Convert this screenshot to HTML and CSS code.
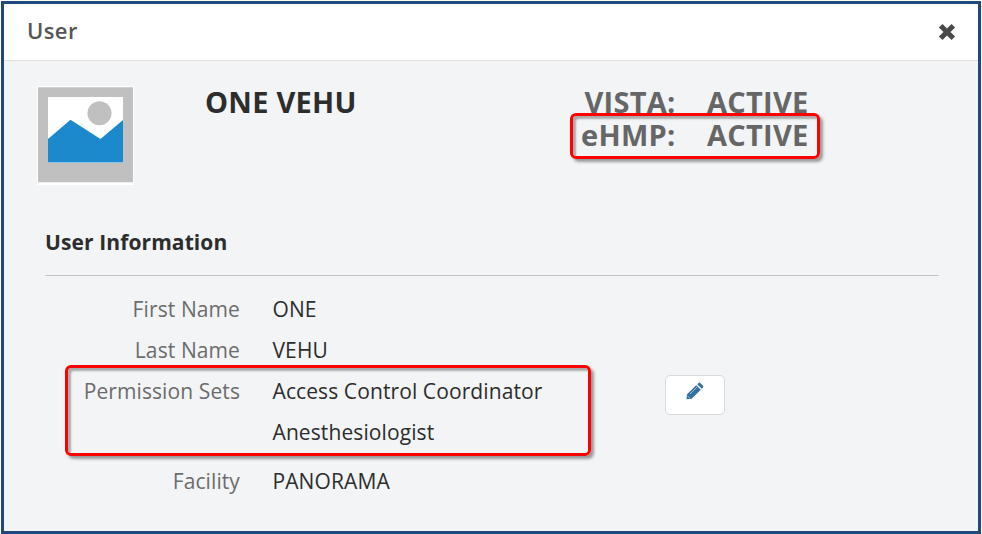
FILE: index.html
```html
<!DOCTYPE html>
<html lang="en">
<head>
<meta charset="utf-8">
<title>User</title>
<link rel="stylesheet" href="styles.css">
</head>
<body>
<main class="modal">
  <header class="modal-header">
    <h1 class="modal-title">User</h1>
    <button class="close" type="button" aria-label="Close">
      <svg width="18" height="18" viewBox="0 0 18 18"><path d="M2.7 2.7L15.3 15.3M15.3 2.7L2.7 15.3"/></svg>
    </button>
  </header>
  <section class="summary">
    <svg class="avatar" width="97" height="99" viewBox="0 0 97 99">
      <path fill="#fff" d="M0 0h97v99H0z"/>
      <path fill="#c0c0c0" d="M1 1.3h95v95H1z"/>
      <path fill="#fff" d="M11 11h75v66H11z"/>
      <circle cx="62.5" cy="27.3" r="12" fill="#c0c0c0"/>
      <path fill="#1b89cc" d="M11 53L33.5 33.7L63.5 53L86 34v42.5H11z"/>
    </svg>
    <h2 class="name">ONE VEHU</h2>
    <dl class="status">
      <dt>VISTA:</dt><dd>ACTIVE</dd>
      <dt>eHMP:</dt><dd>ACTIVE</dd>
      <div class="mark mark-status"></div>
    </dl>
  </section>
  <section class="info">
    <h3 class="info-title">User Information</h3>
    <div class="row"><span class="label">First Name</span><span class="value">ONE</span></div>
    <div class="row"><span class="label">Last Name</span><span class="value">VEHU</span></div>
    <div class="row permissions">
      <span class="label">Permission Sets</span>
      <div class="value sets"><span>Access Control Coordinator</span><span>Anesthesiologist</span></div>
      <button class="edit" type="button" aria-label="Edit permission sets">
        <svg width="18" height="18" viewBox="0 0 18 18">
          <path fill="#3071a0" d="M.5 17.3L1 12.2L10.2 3.2L14.8 7.8L5.6 16.8ZM11.2 2.2L12.5.9Q13.4.3 14.3 1L17 3.7Q17.7 4.6 17 5.5L15.8 6.8Z"/>
          <path fill="none" stroke="#a9c9dd" stroke-width=".9" d="M4 12L11 5M1.6 14L4 16.3"/>
        </svg>
      </button>
      <div class="mark mark-permissions"></div>
    </div>
    <div class="row facility"><span class="label">Facility</span><span class="value">PANORAMA</span></div>
  </section>
</main>
</body>
</html>
```
FILE: styles.css
```css
* { box-sizing: border-box; }
body { margin: 0; background: #fff; font-family: "Open Sans", "Noto Sans", sans-serif; color: #2d2d2d; }
h1, h2, h3, dl, dd { margin: 0; }
button { padding: 0; font: inherit; }
.modal { width: 980px; height: 533px; margin: 1px; border: 3px solid #1f497d; background: #f2f4f6; }
.modal-header { display: flex; align-items: center; justify-content: space-between; height: 57px; padding: 0 22px 3px 23px; border-bottom: 1px solid #e0e0e0; background: #fff; }
.modal-title { margin-top: -1px; font-size: 22px; line-height: 30px; font-weight: 600; letter-spacing: .4px; color: #555; }
.close { display: flex; border: 0; background: none; margin-top: 3px; }
.close path { stroke: #494949; stroke-width: 5; }
.summary { display: flex; height: 160px; padding: 24px 0 0 33px; }
.avatar { display: block; flex: none; margin-top: 1px; }
.name { flex: none; width: 445.5px; padding-left: 71px; font-size: 29px; line-height: 33px; font-weight: 700; letter-spacing: .25px; white-space: nowrap; }
.status { position: relative; display: grid; grid-template-columns: 96px 133px; grid-auto-rows: 33px; justify-content: start; font-size: 29px; line-height: 33px; font-weight: 700; letter-spacing: .25px; color: #666; text-align: right; }
.mark { position: absolute; border: 3px solid #fe0000; border-radius: 6px; box-shadow: 3px 3px 3px #999, inset 3px 3px 2px #aaa; }
.mark-status { left: -9.5px; top: 28px; width: 250px; height: 46px; }
.info { width: 894px; margin-left: 41px; }
.info-title { height: 55px; margin-bottom: 13px; border-bottom: 1px solid #c4c6c7; font-size: 21px; line-height: 43px; font-weight: 700; letter-spacing: .1px; }
.row { display: grid; grid-template-columns: 195px 392px 60px; column-gap: 33px; height: 41px; font-size: 21px; line-height: 41px; letter-spacing: .1px; white-space: nowrap; }
.label { text-align: right; color: #6c6c6c; }
.value { margin-left: -.5px; }
.permissions { position: relative; height: 82px; }
.sets { display: flex; flex-direction: column; }
.mark-permissions { left: 20px; top: -6px; width: 526px; height: 91px; }
.edit { display: flex; align-items: flex-start; justify-content: center; width: 60px; height: 40px; margin: 4px 0 0 -33px; padding-top: 6px; border: 1px solid #d8dadd; border-radius: 5px; background: #fff; }
.facility { margin-top: 8px; }
```
